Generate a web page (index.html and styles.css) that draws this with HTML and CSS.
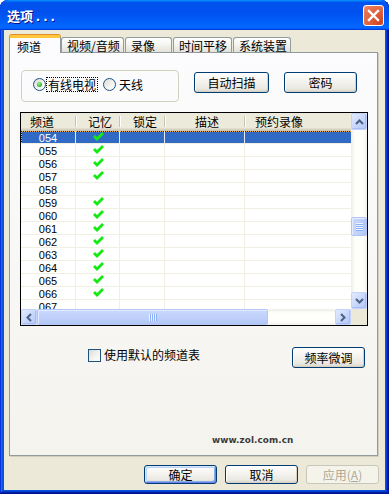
FILE: index.html
```html
<!DOCTYPE html>
<html lang="zh-CN">
<head>
<meta charset="utf-8">
<title>选项</title>
<link rel="stylesheet" href="styles.css">
</head>
<body>
<div class="window">
  <div class="titlebar">
    <span class="title">选项<span class="dots">...</span></span>
    <div class="close">
      <svg width="19" height="19" viewBox="0 0 19 19"><path d="M5 5 L14 14 M14 5 L5 14" stroke="#fff" stroke-width="2.4" stroke-linecap="square"/></svg>
    </div>
  </div>
  <div class="client">
    <div class="tabs">
      <div class="tab active tw1">频道</div>
      <div class="tab tw2">视频/音频</div>
      <div class="tab tw3">录像</div>
      <div class="tab tw4">时间平移</div>
      <div class="tab tw5">系统装置</div>
    </div>
    <div class="panel">
      <div class="row-top">
        <div class="group">
          <span class="radio checked"><span class="dot"></span></span>
          <span class="rlabel focus">有线电视</span>
          <span class="radio second"></span>
          <span class="rlabel">天线</span>
        </div>
        <button class="btn btn-scan">自动扫描</button>
        <button class="btn btn-pwd">密码</button>
      </div>

      <div class="list">
        <div class="lv-main">
          <div class="lv-view">
            <div class="lv-head">
              <div class="hc c1">频道</div>
              <div class="hc c2">记忆</div>
              <div class="hc c3">锁定</div>
              <div class="hc c4">描述</div>
              <div class="hc c5">预约录像</div>
            </div>
            <div class="lv-row selected"><div class="cell c1">054</div><div class="cell c2"><svg class="chk" viewBox="0 0 11 10"><path d="M0 5 L2 3 L4 5 L9 0 L11 2 L4 9 Z" fill="#16e816"/></svg></div><div class="cell c3"></div><div class="cell c4"></div><div class="cell c5"></div></div>
            <div class="lv-row"><div class="cell c1">055</div><div class="cell c2"><svg class="chk" viewBox="0 0 11 10"><path d="M0 5 L2 3 L4 5 L9 0 L11 2 L4 9 Z" fill="#16e816"/></svg></div><div class="cell c3"></div><div class="cell c4"></div><div class="cell c5"></div></div>
            <div class="lv-row"><div class="cell c1">056</div><div class="cell c2"><svg class="chk" viewBox="0 0 11 10"><path d="M0 5 L2 3 L4 5 L9 0 L11 2 L4 9 Z" fill="#16e816"/></svg></div><div class="cell c3"></div><div class="cell c4"></div><div class="cell c5"></div></div>
            <div class="lv-row"><div class="cell c1">057</div><div class="cell c2"><svg class="chk" viewBox="0 0 11 10"><path d="M0 5 L2 3 L4 5 L9 0 L11 2 L4 9 Z" fill="#16e816"/></svg></div><div class="cell c3"></div><div class="cell c4"></div><div class="cell c5"></div></div>
            <div class="lv-row"><div class="cell c1">058</div><div class="cell c2"></div><div class="cell c3"></div><div class="cell c4"></div><div class="cell c5"></div></div>
            <div class="lv-row"><div class="cell c1">059</div><div class="cell c2"><svg class="chk" viewBox="0 0 11 10"><path d="M0 5 L2 3 L4 5 L9 0 L11 2 L4 9 Z" fill="#16e816"/></svg></div><div class="cell c3"></div><div class="cell c4"></div><div class="cell c5"></div></div>
            <div class="lv-row"><div class="cell c1">060</div><div class="cell c2"><svg class="chk" viewBox="0 0 11 10"><path d="M0 5 L2 3 L4 5 L9 0 L11 2 L4 9 Z" fill="#16e816"/></svg></div><div class="cell c3"></div><div class="cell c4"></div><div class="cell c5"></div></div>
            <div class="lv-row"><div class="cell c1">061</div><div class="cell c2"><svg class="chk" viewBox="0 0 11 10"><path d="M0 5 L2 3 L4 5 L9 0 L11 2 L4 9 Z" fill="#16e816"/></svg></div><div class="cell c3"></div><div class="cell c4"></div><div class="cell c5"></div></div>
            <div class="lv-row"><div class="cell c1">062</div><div class="cell c2"><svg class="chk" viewBox="0 0 11 10"><path d="M0 5 L2 3 L4 5 L9 0 L11 2 L4 9 Z" fill="#16e816"/></svg></div><div class="cell c3"></div><div class="cell c4"></div><div class="cell c5"></div></div>
            <div class="lv-row"><div class="cell c1">063</div><div class="cell c2"><svg class="chk" viewBox="0 0 11 10"><path d="M0 5 L2 3 L4 5 L9 0 L11 2 L4 9 Z" fill="#16e816"/></svg></div><div class="cell c3"></div><div class="cell c4"></div><div class="cell c5"></div></div>
            <div class="lv-row"><div class="cell c1">064</div><div class="cell c2"><svg class="chk" viewBox="0 0 11 10"><path d="M0 5 L2 3 L4 5 L9 0 L11 2 L4 9 Z" fill="#16e816"/></svg></div><div class="cell c3"></div><div class="cell c4"></div><div class="cell c5"></div></div>
            <div class="lv-row"><div class="cell c1">065</div><div class="cell c2"><svg class="chk" viewBox="0 0 11 10"><path d="M0 5 L2 3 L4 5 L9 0 L11 2 L4 9 Z" fill="#16e816"/></svg></div><div class="cell c3"></div><div class="cell c4"></div><div class="cell c5"></div></div>
            <div class="lv-row"><div class="cell c1">066</div><div class="cell c2"><svg class="chk" viewBox="0 0 11 10"><path d="M0 5 L2 3 L4 5 L9 0 L11 2 L4 9 Z" fill="#16e816"/></svg></div><div class="cell c3"></div><div class="cell c4"></div><div class="cell c5"></div></div>
            <div class="lv-row"><div class="cell c1">067</div><div class="cell c2"></div><div class="cell c3"></div><div class="cell c4"></div><div class="cell c5"></div></div>
          </div>
          <div class="vscroll">
            <div class="sbtn vbtn"><svg width="9" height="6" viewBox="0 0 9 6"><path d="M1 5 L4.5 1.5 L8 5" fill="none" stroke="#4d6185" stroke-width="2"/></svg></div>
            <div class="vtrack">
              <div class="vthumb"><span></span><span></span><span></span><span></span></div>
            </div>
            <div class="sbtn vbtn"><svg width="9" height="6" viewBox="0 0 9 6"><path d="M1 1 L4.5 4.5 L8 1" fill="none" stroke="#4d6185" stroke-width="2"/></svg></div>
          </div>
        </div>
        <div class="lv-bottom">
          <div class="hscroll">
            <div class="sbtn hbtn"><svg width="6" height="9" viewBox="0 0 6 9"><path d="M5 1 L1.5 4.5 L5 8" fill="none" stroke="#4d6185" stroke-width="2"/></svg></div>
            <div class="htrack">
              <div class="hthumb"><span></span><span></span><span></span><span></span></div>
            </div>
            <div class="sbtn hbtn"><svg width="6" height="9" viewBox="0 0 6 9"><path d="M1 1 L4.5 4.5 L1 8" fill="none" stroke="#4d6185" stroke-width="2"/></svg></div>
          </div>
          <div class="corner"></div>
        </div>
      </div>

      <div class="row-opt">
        <span class="checkbox"></span>
        <span class="clabel">使用默认的频道表</span>
        <button class="btn btn-fine">频率微调</button>
      </div>

      <div class="watermark">www.zol.com.cn</div>
    </div>
    <div class="footer">
      <button class="btn fbtn default">确定</button>
      <button class="btn fbtn">取消</button>
      <button class="btn fbtn disabled">应用(<u>A</u>)</button>
    </div>
  </div>
</div>
</body>
</html>
```

FILE: styles.css
```css
* { box-sizing: border-box; }
html, body { margin: 0; padding: 0; background: #ffffff; }
body {
  font-family: "Noto Sans CJK SC", "Liberation Sans", sans-serif;
  font-size: 12px;
  color: #000;
  width: 389px;
  height: 494px;
  overflow: hidden;
}

.window {
  width: 389px;
  height: 494px;
  display: flex;
  flex-direction: column;
  background: #0855dd;
  border-radius: 8px 8px 0 0;
  overflow: hidden;
  box-shadow: inset -1px -1px #00138c, inset 1px 1px #0831d9, inset -2px -2px #001ea0, inset 2px 2px #166aee, inset -3px -3px #003bda, inset 3px 3px #0855dd;
}

/* Title bar */
.titlebar {
  height: 30px;
  flex: none;
  display: flex;
  align-items: center;
  padding: 0 5px 0 7px;
  background: linear-gradient(180deg, #0997ff, #0053ee 8%, #0050ee 40%, #0066ff 88%, #0066ff 93%, #005bff 95%, #003dd7 96%, #003dd7);
  border-radius: 8px 8px 0 0;
}
.title {
  flex: 1;
  color: #fff;
  font-weight: bold;
  font-size: 13px;
  line-height: 16px;
  text-shadow: 1px 1px #0f1089;
  padding-top: 2px;
}
.title .dots {
  font-family: "Liberation Sans", sans-serif;
  letter-spacing: 3.5px;
  margin-left: 3px;
  font-size: 14px;
}
.close {
  width: 21px;
  height: 21px;
  border: 1px solid #fff;
  border-radius: 3px;
  background: radial-gradient(circle at 85% 85%, #cc4622 0%, #dc5a34 35%, #e77855 80%, #f09a80 100%);
  display: flex;
  align-items: center;
  justify-content: center;
  margin-top: 1px;
}
.close svg { display: block; }

/* Client */
.client {
  flex: 1;
  margin: 0 4px 4px 4px;
  background: #ece9d8;
  display: flex;
  flex-direction: column;
  padding: 5px 6px 6px 5px;
}

/* Tabs */
.tabs {
  height: 17px;
  flex: none;
  display: flex;
  align-items: flex-end;
  position: relative;
  z-index: 2;
}
.tab {
  height: 15px;
  padding: 1px 0 0 5px;
  line-height: 14px;
  border: 1px solid #919b9c;
  border-bottom: none;
  border-radius: 3px 3px 0 0;
  background: linear-gradient(180deg, #ffffff 0%, #f3f3ef 50%, #e3e2da 100%);
  margin-right: 1px;
  white-space: nowrap;
}
.tab.active {
  height: 18px;
  margin-bottom: -1px;
  padding: 2px 0 0 7px;
  margin-right: 0;
  background: #fcfcfe;
  border-top: 3px solid #ffc73c;
  box-shadow: 0 -1px 0 #e68b2c;
}
.tw1 { width: 52px; }
.tw2 { width: 63px; }
.tw3 { width: 47px; }
.tw4 { width: 59px; }
.tw5 { width: 58px; }

/* Panel */
.panel {
  flex: 1;
  margin-right: 1px;
  border: 1px solid #919b9c;
  box-shadow: 1px 1px 0 #d0cebf;
  background: linear-gradient(180deg, #fcfcfe 0%, #f4f3ee 100%);
  padding: 0 0 0 10px;
  display: flex;
  flex-direction: column;
}

.row-top {
  display: flex;
  align-items: flex-start;
  margin-top: 17px;
  height: 32px;
}
.group {
  width: 158px;
  height: 32px;
  margin-left: 1px;
  border: 1px solid #d0d0bf;
  border-radius: 4px;
  display: flex;
  align-items: center;
  padding: 0 0 3px 11px;
}
.radio {
  width: 13px;
  height: 13px;
  border-radius: 50%;
  border: 1px solid #1c5180;
  background: linear-gradient(135deg, #dcdcd7 0%, #f4f4f0 60%, #ffffff 100%);
  display: flex;
  align-items: center;
  justify-content: center;
  flex: none;
}
.radio .dot {
  width: 5px;
  height: 5px;
  border-radius: 50%;
  background: radial-gradient(circle at 40% 35%, #a8f0a0 0%, #44c444 50%, #1a9a1a 100%);
}
.radio.second { margin-left: 6px; }
.rlabel {
  line-height: 13px;
  padding: 0 0 0 1px;
  margin-left: 2px;
  white-space: nowrap;
}
.rlabel.focus {
  outline: 1px dotted #000;
  outline-offset: 0px;
  padding: 0 1px;
  margin-left: 1px;
}
.rlabel:last-child { margin-left: 2px; }

.btn {
  font-family: "Noto Sans CJK SC", "Liberation Sans", sans-serif;
  font-size: 12px;
  line-height: 14px;
  color: #000;
  border: 1px solid #003c74;
  border-radius: 3px;
  background: linear-gradient(180deg, #ffffff 0%, #f5f4f0 40%, #ebe9e2 80%, #d8d4c8 100%);
  box-shadow: inset -1px -1px 0 #d6d0c5, inset 1px 1px 0 #ffffff;
  padding: 0;
  display: flex;
  align-items: center;
  justify-content: center;
}
.btn-scan { width: 75px; height: 21px; margin: 2px 0 0 15px; }
.btn-pwd { width: 73px; height: 21px; margin: 2px 0 0 15px; }

/* List view */
.list {
  width: 348px;
  height: 214px;
  margin-top: 10px;
  border: 1px solid #000;
  background: #fff;
  display: flex;
  flex-direction: column;
  flex: none;
}
.lv-main {
  display: flex;
  height: 196px;
}
.lv-view {
  width: 330px;
  height: 196px;
  overflow: hidden;
  background: #fff;
}
.lv-head {
  display: flex;
  height: 18px;
  width: 424px;
  background: #ebeadb;
  box-shadow: inset 0 -1px 0 #cbc7b8, inset 0 -2px 0 #d6d2c2, inset 0 -3px 0 #e2decd;
}
.hc {
  height: 18px;
  line-height: 17px;
  padding-top: 0;
  white-space: nowrap;
  position: relative;
  flex: none;
}
.hc::after {
  content: "";
  position: absolute;
  right: 0;
  top: 3px;
  bottom: 4px;
  width: 1px;
  background: #c7c5b2;
  box-shadow: 1px 0 0 #fff;
}
.hc.c5::after { display: none; }
.c1 { width: 55px; }
.c2 { width: 44px; }
.c3 { width: 45px; }
.c4 { width: 80px; }
.c5 { width: 200px; }
.hc.c1 { padding-left: 9px; }
.hc.c2 { padding-left: 12px; }
.hc.c3 { padding-left: 13px; }
.hc.c4 { padding-left: 30px; }
.hc.c5 { padding-left: 10px; }

.lv-row {
  display: flex;
  width: 424px;
  height: 13px;
  border-bottom: 1px solid #f1efe2;
}
.cell {
  height: 12px;
  line-height: 12px;
  border-right: 1px solid #f1efe2;
  flex: none;
  display: flex;
  align-items: center;
  justify-content: center;
}
.cell.c1 {
  font-family: "Liberation Sans", Arial, sans-serif;
  font-size: 11px;
  line-height: 12px;
  padding-top: 1px;
}
.chk { width: 11px; height: 10px; display: block; margin-left: 1px; }
.lv-row.selected {
  background: #316ac5;
  color: #fff;
  background-image: linear-gradient(90deg, #1a1a1a 50%, #f0b040 50%), linear-gradient(180deg, #1a1a1a 50%, #f0b040 50%);
  background-size: 2px 1px, 1px 2px;
  background-repeat: repeat-x, repeat-y;
  background-position: 0 0, 0 0;
  background-color: #316ac5;
}
.lv-row.selected .cell { border-right-color: #e8ecf6; }

/* Scroll bars */
.vscroll {
  width: 16px;
  height: 196px;
  display: flex;
  flex-direction: column;
  background: linear-gradient(90deg, #eeede5 0%, #fefefb 25%, #fefefb 75%, #f3f1ec 100%);
}
.sbtn {
  flex: none;
  border: 1px solid #c3d3fd;
  border-radius: 2px;
  background: linear-gradient(135deg, #e3ebfe 0%, #c9d8fc 50%, #b4c8f6 100%);
  box-shadow: inset -1px -1px 0 #a8bef0;
  display: flex;
  align-items: center;
  justify-content: center;
}
.vbtn { width: 16px; height: 17px; }
.vtrack { flex: 1; }
.vthumb {
  margin-top: 87px;
  width: 16px;
  height: 19px;
  border: 1px solid #b2c6f5;
  border-radius: 2px;
  background: linear-gradient(90deg, #c9d8fc 0%, #bed0fa 60%, #b1c6f6 100%);
  box-shadow: inset 1px 1px 0 #e4ecfe;
  display: flex;
  flex-direction: column;
  align-items: center;
  justify-content: center;
  gap: 1px;
}
.vthumb span {
  display: block;
  width: 7px;
  height: 1px;
  background: #eef4fe;
  box-shadow: 0 1px 0 #8cb0f8;
}
.lv-bottom {
  display: flex;
  height: 16px;
}
.hscroll {
  width: 330px;
  height: 16px;
  display: flex;
  background: linear-gradient(180deg, #eeede5 0%, #fefefb 25%, #fefefb 75%, #f3f1ec 100%);
}
.hbtn { width: 16px; height: 16px; }
.htrack { flex: 1; }
.hthumb {
  width: 231px;
  height: 16px;
  border: 1px solid #b2c6f5;
  border-radius: 2px;
  background: linear-gradient(180deg, #c9d8fc 0%, #bed0fa 60%, #b1c6f6 100%);
  box-shadow: inset 1px 1px 0 #e4ecfe;
  display: flex;
  align-items: center;
  justify-content: center;
  gap: 1px;
}
.hthumb span {
  display: block;
  width: 1px;
  height: 7px;
  background: #eef4fe;
  box-shadow: 1px 0 0 #8cb0f8;
}
.corner {
  width: 16px;
  height: 16px;
  background: #ece9d8;
}

/* Options row */
.row-opt {
  display: flex;
  align-items: flex-start;
  width: 348px;
  height: 21px;
  margin-top: 21px;
  flex: none;
}
.checkbox {
  width: 13px;
  height: 13px;
  margin: 2px 0 0 68px;
  border: 1px solid #1c5180;
  background: linear-gradient(135deg, #dcdcd7 0%, #f4f4f0 60%, #ffffff 100%);
  flex: none;
}
.clabel {
  margin-left: 3px;
  line-height: 14px;
  padding-top: 1px;
  white-space: nowrap;
}
.btn-fine {
  width: 73px;
  height: 21px;
  margin-left: auto;
  margin-right: 3px;
}

.watermark {
  margin: 67px 0 0 192px;
  font-family: "DejaVu Sans", Verdana, sans-serif;
  font-weight: bold;
  font-size: 8.8px;
  line-height: 10px;
  color: #3a3a3a;
  letter-spacing: 0.1px;
}

/* Footer */
.footer {
  flex: none;
  display: flex;
  justify-content: flex-end;
  margin-top: 9px;
  height: 19px;
  gap: 8px;
}
.fbtn { width: 73px; height: 19px; }
.fbtn.default {
  box-shadow: inset 1px 1px 0 #cee7ff, inset -1px -1px 0 #6982ee, inset 2px 2px 0 #bcd4f6, inset -2px -2px 0 #89ade4;
}
.fbtn.disabled {
  border-color: #c9c7ba;
  color: #aca899;
  background: #f5f4ea;
  box-shadow: none;
}
.fbtn.disabled u { text-decoration: underline; }
```
